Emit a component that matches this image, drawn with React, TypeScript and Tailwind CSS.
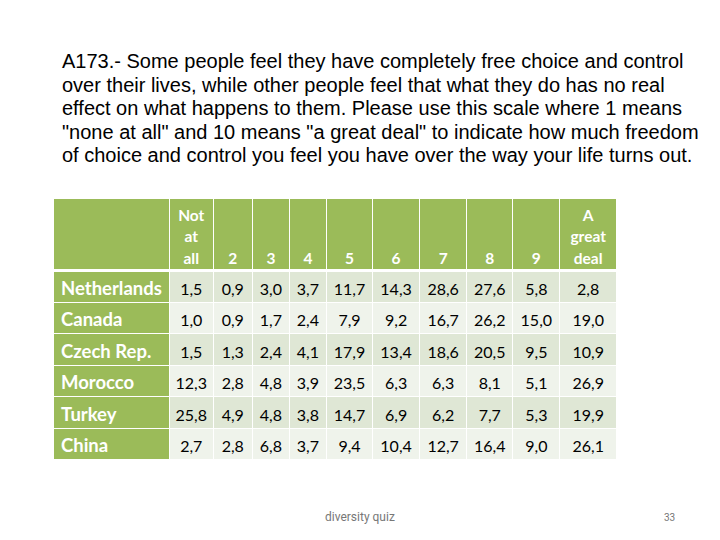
import React from "react";

const headers = ["Not at all", "2", "3", "4", "5", "6", "7", "8", "9", "A great deal"];
const widths = [115, 44, 39, 37, 37, 46, 47, 47, 46, 47, 56];

const lines = [
  "A173.- Some people feel they have completely free choice and control",
  "over their lives, while other people feel that what they do has no real",
  "effect on what happens to them. Please use this scale where 1 means",
  "\"none at all\" and 10 means \"a great deal\" to indicate how much freedom",
  "of choice and control you feel you have over the way your life turns out.",
];

const rows: [string, string[]][] = [
  ["Netherlands", ["1,5", "0,9", "3,0", "3,7", "11,7", "14,3", "28,6", "27,6", "5,8", "2,8"]],
  ["Canada", ["1,0", "0,9", "1,7", "2,4", "7,9", "9,2", "16,7", "26,2", "15,0", "19,0"]],
  ["Czech Rep.", ["1,5", "1,3", "2,4", "4,1", "17,9", "13,4", "18,6", "20,5", "9,5", "10,9"]],
  ["Morocco", ["12,3", "2,8", "4,8", "3,9", "23,5", "6,3", "6,3", "8,1", "5,1", "26,9"]],
  ["Turkey", ["25,8", "4,9", "4,8", "3,8", "14,7", "6,9", "6,2", "7,7", "5,3", "19,9"]],
  ["China", ["2,7", "2,8", "6,8", "3,7", "9,4", "10,4", "12,7", "16,4", "9,0", "26,1"]],
];

export default function App() {
  return (
    <div className="w-[720px] h-[540px] bg-white relative overflow-hidden">
      <div className="pt-[50px] pl-[62px]">
        <div
          className="text-[20px] leading-[23.5px] text-black whitespace-nowrap"
          style={{ fontFamily: '"Liberation Sans", Arial, sans-serif' }}
        >
          {lines.map((l, i) => (
            <div key={i}>{l}</div>
          ))}
        </div>
      </div>

      <div className="pl-[54px] pt-[31px]">
        <table
          className="border-collapse table-fixed"
          style={{ fontFamily: 'Lato, "Open Sans", sans-serif', width: 562 }}
        >
          <colgroup>
            {widths.map((w, i) => (
              <col key={i} style={{ width: w }} />
            ))}
          </colgroup>
          <thead>
            <tr className="h-[72px] bg-[#9bbb59] border-b-[3px] border-white">
              <th className="border-r border-white"></th>
              {headers.map((h, i) => (
                <th
                  key={i}
                  className="align-bottom text-center text-white font-bold text-[15.5px] leading-[21.5px] pb-0 border-r border-white last:border-r-0 px-0"
                >
                  {h.split(" ").map((w, j) => (
                    <div key={j}>{w}</div>
                  ))}
                </th>
              ))}
            </tr>
          </thead>
          <tbody>
            {rows.map(([name, vals], r) => (
              <tr
                key={name}
                className={`h-[31.5px] border-b border-white ${r % 2 === 0 ? "bg-[#dfe7d5]" : "bg-[#eff3eb]"}`}
              >
                <td className="bg-[#9bbb59] text-white font-bold text-[18.5px] leading-[22px] pl-[7px] pt-[3px] pb-0 border-r border-white whitespace-nowrap">
                  {name}
                </td>
                {vals.map((v, i) => (
                  <td
                    key={i}
                    className="text-center text-[16px] leading-[22px] pt-[5px] pb-0 text-black border-r border-white last:border-r-0 whitespace-nowrap"
                  >
                    {v}
                  </td>
                ))}
              </tr>
            ))}
          </tbody>
        </table>
      </div>

      <div
        className="absolute top-[508px] left-[325px] text-[12px] text-[#777777]"
        style={{ fontFamily: 'Roboto, "Liberation Sans", sans-serif' }}
      >
        diversity quiz
      </div>
      <div
        className="absolute top-[510px] left-[664px] text-[10px] text-[#777777]"
        style={{ fontFamily: 'Roboto, "Liberation Sans", sans-serif' }}
      >
        33
      </div>
    </div>
  );
}
